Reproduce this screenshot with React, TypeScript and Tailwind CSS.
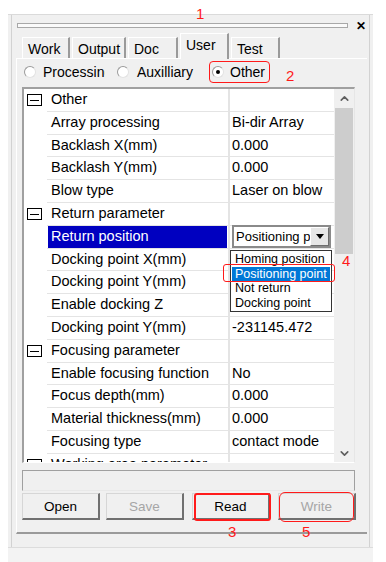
import { ChevronUp, ChevronDown } from "lucide-react";

type Row = {
  name: string;
  value?: string;
  cat?: boolean;
  selected?: boolean;
  combo?: boolean;
};

const rows: Row[] = [
  { name: "Other", cat: true },
  { name: "Array processing", value: "Bi-dir Array" },
  { name: "Backlash X(mm)", value: "0.000" },
  { name: "Backlash Y(mm)", value: "0.000" },
  { name: "Blow type", value: "Laser on blow" },
  { name: "Return parameter", cat: true },
  { name: "Return position", selected: true, combo: true },
  { name: "Docking point X(mm)", value: "" },
  { name: "Docking point Y(mm)", value: "" },
  { name: "Enable docking Z", value: "" },
  { name: "Docking point Y(mm)", value: "-231145.472" },
  { name: "Focusing parameter", cat: true },
  { name: "Enable focusing function", value: "No" },
  { name: "Focus depth(mm)", value: "0.000" },
  { name: "Material thickness(mm)", value: "0.000" },
  { name: "Focusing type", value: "contact mode" },
  { name: "Working area parameter", cat: true },
];

const tabs = [
  { label: "Work", w: "w-[48px]" },
  { label: "Output", w: "w-[54px]" },
  { label: "Doc", w: "w-[50px]" },
  { label: "User", w: "w-[49px]", active: true },
  { label: "Test", w: "w-[49px]" },
];

function Radio({ checked }: { checked?: boolean }) {
  return (
    <span className="flex h-[12px] w-[12px] shrink-0 items-center justify-center rounded-full border border-t-[#9a9a9a] border-l-[#9a9a9a] border-r-[#e2e2e2] border-b-[#e2e2e2] bg-white">
      {checked && <span className="h-[4px] w-[4px] rounded-full bg-black" />}
    </span>
  );
}

function ExpandBox() {
  return (
    <div className="ml-[3px] flex h-[12px] w-[15px] items-center justify-center border border-black bg-white">
      <div className="h-[1px] w-[9px] bg-black" />
    </div>
  );
}

function GridRow({ row }: { row: Row }) {
  return (
    <div className="flex h-[22.8px] shrink-0">
      <div className="flex w-[23px] shrink-0 items-center bg-white">{row.cat && <ExpandBox />}</div>
      <div className="flex flex-1 gap-[2px] bg-[#e4e4e4] pb-[1px]">
        <div className="flex w-[181px] shrink-0 items-center bg-white pl-[1px]">
          <div
            className={
              row.selected
                ? "flex h-full w-[179px] items-center bg-[#0000c0] pl-[3px] text-white"
                : "flex h-full items-center pl-[3px]"
            }
          >
            <span className="whitespace-nowrap">{row.name}</span>
          </div>
        </div>
        <div className="flex flex-1 items-center bg-white pl-[2px]">
          {row.combo ? (
            <div className="flex h-[23px] w-[99px] items-center border-2 border-[#8a8a8a] bg-white">
              <span className="flex-1 overflow-hidden whitespace-nowrap pl-[2px] text-[13px]">Positioning point</span>
              <span className="flex h-full w-[19px] shrink-0 items-center justify-center border-l border-t border-white border-r border-b border-r-[#6d6d6d] border-b-[#6d6d6d] bg-[#e6e6e6]">
                <span className="h-0 w-0 border-x-[4px] border-t-[5px] border-x-transparent border-t-black" />
              </span>
            </div>
          ) : (
            <span className="whitespace-nowrap">{row.value}</span>
          )}
        </div>
      </div>
    </div>
  );
}

function Btn({ label, disabled, className }: { label: string; disabled?: boolean; className?: string }) {
  return (
    <div
      className={`flex h-[27px] w-[78px] items-center justify-center border-t border-l border-[#d6d6d6] border-r-2 border-b-2 border-r-[#707070] border-b-[#707070] bg-[#f0f0f0] pt-[2px] text-[13.5px] ${
        disabled ? "text-[#a6a6a6]" : "text-black"
      } ${className ?? ""}`}
    >
      {label}
    </div>
  );
}

export default function App() {
  return (
    <div className="relative h-[562px] w-[386px] overflow-hidden bg-white font-['Liberation_Sans',Arial,sans-serif] text-[14.5px] text-black">
      <div className="ml-[8px] mt-[14px] flex h-[548px] w-[365px] flex-col border-t border-[#dadada] bg-[#f0f0f0]">
        <div className="mx-[3px] flex flex-1 flex-col border-x border-[#d2d2d2]">
          {/* grip */}
          <div className="flex h-[18px] shrink-0 items-center pl-[5px]">
            <div className="mt-[2px] h-[5px] w-[331px] border border-[#a8a8a8] bg-[#fafafa]" />
            <span className="ml-[8px] mt-[3px] text-[12px] font-bold leading-none">✕</span>
          </div>

          {/* tabs */}
          <div className="relative z-10 flex h-[25px] shrink-0 items-end gap-[2px] pl-[10px] text-[14px]">
            {tabs.map((t) => (
              <div
                key={t.label}
                className={`${t.w} flex items-center border-t border-l border-white border-r-2 border-r-[#9a9a9a] bg-[#f0f0f0] pl-[5px] ${
                  t.active ? "-mb-[1px] h-[26px] pb-[3px]" : "h-[21px] pt-[2px]"
                }`}
              >
                {t.label}
              </div>
            ))}
          </div>

          {/* tab pane */}
          <div className="ml-[4px] mr-[2px] flex flex-col border-t border-l border-white border-b-2 border-b-[#9a9a9a] pl-[5px]">
            <div className="flex h-[23px] items-center pt-[3px] text-[14px]">
              <span className="ml-[2px]">
                <Radio />
              </span>
              <span className="ml-[7px] w-[62px] overflow-hidden whitespace-nowrap">Processing</span>
              <span className="ml-[12px]">
                <Radio />
              </span>
              <span className="ml-[8px] w-[68px] whitespace-nowrap">Auxilliary</span>
              <span className="ml-[7px]">
                <Radio checked />
              </span>
              <span className="ml-[6px]">Other</span>
            </div>

            {/* property grid */}
            <div className="mt-[5px] flex h-[376px] w-[333px] border-t-2 border-l-2 border-[#a0a0a0] border-r border-b border-r-[#e6e6e6] border-b-[#ffffff] bg-white">
              <div className="relative flex flex-1 flex-col overflow-hidden">
                {rows.map((r, i) => (
                  <GridRow key={i} row={r} />
                ))}
                <div className="absolute left-[206px] top-[161px] flex w-[102px] flex-col border border-[#333] bg-white py-[1px] text-[12.5px] leading-[14.5px]">
                  <span className="pl-[4px]">Homing position</span>
                  <span className="mx-[1px] bg-[#0078d7] pl-[3px] text-white">Positioning point</span>
                  <span className="pl-[4px]">Not return</span>
                  <span className="pl-[4px]">Docking point</span>
                </div>
              </div>
              <div className="flex w-[20px] shrink-0 flex-col bg-[#f0f0f0]">
                <div className="flex h-[19px] items-center justify-center">
                  <ChevronUp size={13} strokeWidth={3} color="#5f5f5f" />
                </div>
                <div className="mx-[1px] h-[146px] bg-[#cdcdcd]" />
                <div className="flex-1" />
                <div className="flex h-[17px] items-center justify-center">
                  <ChevronDown size={13} strokeWidth={3} color="#5f5f5f" />
                </div>
              </div>
            </div>

            {/* status */}
            <div className="mt-[7px] h-[21px] w-[333px] border border-[#a0a0a0] border-b-[#e8e8e8] bg-[#f0f0f0]" />

            {/* buttons */}
            <div className="mt-[2px] flex">
              <Btn label="Open" />
              <Btn label="Save" disabled className="ml-[6px]" />
              <Btn label="Read" className="ml-[8px]" />
              <Btn label="Write" disabled className="ml-[8px]" />
            </div>
            <div className="h-[12px]" />
          </div>
        </div>
        <div className="h-[15px] shrink-0 border-t border-[#dcdcdc] bg-[#f3f3f3]" />
      </div>

      {/* red annotations */}
      <span className="absolute left-[196px] top-[6px] text-[15px] leading-none text-[#ff1a1a]">1</span>
      <div className="absolute left-[180px] top-[33px] h-[24px] w-[49px] rounded-[4px] border border-[#ff1a1a]" />
      <div className="absolute left-[209px] top-[61px] h-[22px] w-[61px] rounded-[4px] border border-[#ff1a1a]" />
      <span className="absolute left-[286px] top-[68px] text-[15px] leading-none text-[#ff1a1a]">2</span>
      <div className="absolute left-[223px] top-[264px] h-[18px] w-[112px] rounded-[3px] border border-[#ff1a1a]" />
      <span className="absolute left-[342px] top-[253px] text-[15px] leading-none text-[#ff1a1a]">4</span>
      <div className="absolute left-[194px] top-[493px] h-[28px] w-[77px] rounded-[3px] border-2 border-[#ff1a1a]" />
      <div className="absolute left-[279px] top-[492px] h-[30px] w-[75px] rounded-[6px] border border-[#ff1a1a]" />
      <span className="absolute left-[228px] top-[524px] text-[15px] leading-none text-[#ff1a1a]">3</span>
      <span className="absolute left-[302px] top-[524px] text-[15px] leading-none text-[#ff1a1a]">5</span>
    </div>
  );
}
